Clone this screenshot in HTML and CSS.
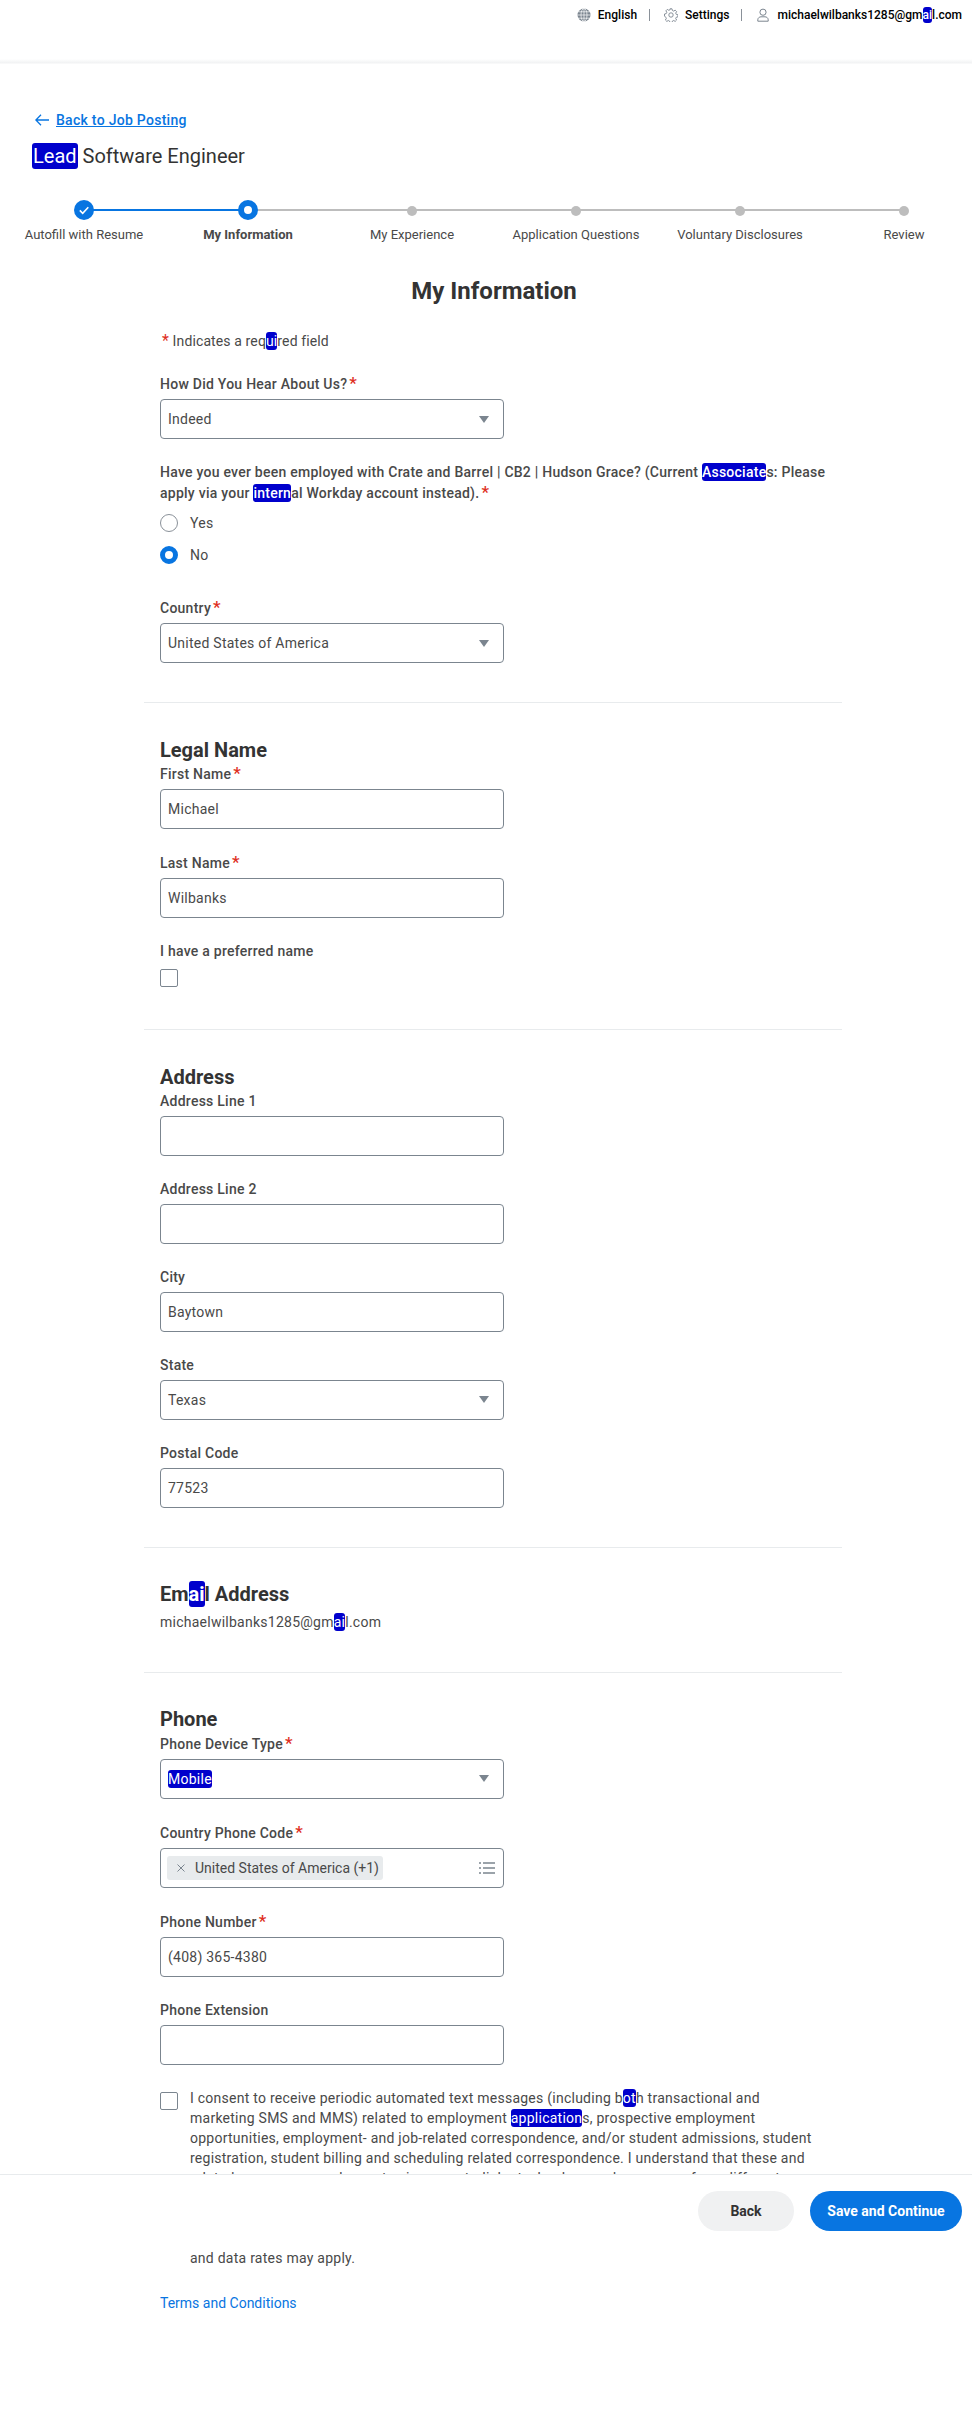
FILE: index.html
```html
<!DOCTYPE html>
<html lang="en">
<head>
<meta charset="utf-8">
<title>Lead Software Engineer - My Information</title>
<link rel="stylesheet" href="styles.css">
</head>
<body>
<header class="topbar">
  <div class="topnav">
    <svg class="nav-icon" viewBox="0 0 14 14"><circle cx="7" cy="7" r="6.5" fill="#7b858f"/><g fill="none" stroke="#fff" stroke-width=".7"><ellipse cx="7" cy="7" rx="3" ry="6.5"/><path d="M.5 7h13M1.4 3.8h11.2M1.4 10.2h11.2M7 .5v13"/></g></svg>
    <span>English</span>
    <i class="nav-sep"></i>
    <svg class="nav-icon gear" viewBox="0 0 14 14"><g fill="none" stroke="#7b858f" stroke-width=".9"><circle cx="7" cy="7" r="2.2"/><path d="M6 .8h2l.4 1.7 1.3.6 1.5-.9 1.4 1.4-.9 1.5.6 1.3 1.7.4v2l-1.7.4-.6 1.3.9 1.5-1.4 1.4-1.5-.9-1.3.6-.4 1.7H6l-.4-1.7-1.3-.6-1.5.9-1.4-1.4.9-1.5-.6-1.3L.5 8V6l1.7-.4.6-1.3-.9-1.5 1.4-1.4 1.5.9 1.3-.6z"/></g></svg>
    <span>Settings</span>
    <i class="nav-sep"></i>
    <svg class="nav-icon" viewBox="0 0 14 14"><g fill="none" stroke="#7b858f" stroke-width="1"><circle cx="7" cy="4.2" r="3.1"/><path d="M1.8 13.2v-1.4c0-1.8 1.6-3 3.2-3h4c1.6 0 3.2 1.2 3.2 3v1.4z"/></g></svg>
    <span>michaelwilbanks1285@gm<span class="hl">ai</span>l.com</span>
  </div>
</header>

<main class="page">
  <a class="back-link" href="#">
    <svg class="back-arrow" viewBox="0 0 14 12"><path d="M6 .8.9 6 6 11.2M1 6h13" fill="none" stroke="#0875e1" stroke-width="1.3"/></svg>
    <span>Back to Job Posting</span>
  </a>
  <div class="job-title"><span class="hl hl-title">Lead</span> Software Engineer</div>

  <ol class="stepper">
    <li class="step done"><span class="dot"><svg viewBox="0 0 20 20" class="check"><path d="M5.8 10.4l2.9 2.9 5.6-6" fill="none" stroke="#fff" stroke-width="1.6"/></svg></span><span class="step-label">Autofill with Resume</span></li>
    <li class="step current"><span class="dot"></span><span class="step-label">My Information</span></li>
    <li class="step"><span class="dot"></span><span class="step-label">My Experience</span></li>
    <li class="step"><span class="dot"></span><span class="step-label">Application Questions</span></li>
    <li class="step"><span class="dot"></span><span class="step-label">Voluntary Disclosures</span></li>
    <li class="step"><span class="dot"></span><span class="step-label">Review</span></li>
  </ol>

  <h1 class="page-heading">My Information</h1>

  <section class="section section-first">
    <p class="required-note"><span class="star">*</span> Indicates a req<span class="hl">ui</span>red field</p>
    <div class="field">
      <div class="label req">How Did You Hear About Us?<span class="star">*</span></div>
      <div class="box select">Indeed<i class="caret"></i></div>
    </div>
    <div class="question">
      <div class="question-text">Have you ever been employed with Crate and Barrel | CB2 | Hudson Grace? (Current <span class="hl">Associate</span>s: Please apply via your <span class="hl">intern</span>al Workday account instead).<span class="star">*</span></div>
      <div class="radio-row"><i class="radio"></i>Yes</div>
      <div class="radio-row"><i class="radio on"></i>No</div>
    </div>
    <div class="field">
      <div class="label req">Country<span class="star">*</span></div>
      <div class="box select">United States of America<i class="caret"></i></div>
    </div>
  </section>

  <section class="section section-legal">
    <h2 class="section-title">Legal Name</h2>
    <div class="field">
      <div class="label req">First Name<span class="star">*</span></div>
      <div class="box">Michael</div>
    </div>
    <div class="field">
      <div class="label req">Last Name<span class="star">*</span></div>
      <div class="box">Wilbanks</div>
    </div>
    <div class="label label-check">I have a preferred name</div>
    <i class="checkbox"></i>
  </section>

  <section class="section section-address">
    <h2 class="section-title">Address</h2>
    <div class="field">
      <div class="label">Address Line 1</div>
      <div class="box"></div>
    </div>
    <div class="field">
      <div class="label">Address Line 2</div>
      <div class="box"></div>
    </div>
    <div class="field">
      <div class="label">City</div>
      <div class="box">Baytown</div>
    </div>
    <div class="field">
      <div class="label">State</div>
      <div class="box select">Texas<i class="caret"></i></div>
    </div>
    <div class="field">
      <div class="label">Postal Code</div>
      <div class="box">77523</div>
    </div>
  </section>

  <section class="section section-email">
    <h2 class="section-title"><span>Em<span class="hl">ai</span>l Address</span></h2>
    <p class="email-value">michaelwilbanks1285@gm<span class="hl">ai</span>l.com</p>
  </section>

  <section class="section section-phone">
    <h2 class="section-title">Phone</h2>
    <div class="field">
      <div class="label req">Phone Device Type<span class="star">*</span></div>
      <div class="box select"><span class="hl">Mobile</span><i class="caret"></i></div>
    </div>
    <div class="field">
      <div class="label req">Country Phone Code<span class="star">*</span></div>
      <div class="box multi">
        <span class="tag">
          <svg class="tag-x" viewBox="0 0 8 8"><path d="M.5.5l7 7M7.5.5l-7 7" stroke="#7b858f" stroke-width="1" fill="none"/></svg>
          United States of America (+1)
        </span>
        <svg class="list-icon" viewBox="0 0 16 12"><path d="M0 1h2M4 1h12M0 6h2M4 6h12M0 11h2M4 11h12" stroke="#7b858f" stroke-width="1.4" fill="none"/></svg>
      </div>
    </div>
    <div class="field">
      <div class="label req">Phone Number<span class="star">*</span></div>
      <div class="box">(408) 365-4380</div>
    </div>
    <div class="field">
      <div class="label">Phone Extension</div>
      <div class="box"></div>
    </div>
    <div class="consent">
      <i class="checkbox consent-check"></i>
      <p class="consent-text">I consent to receive periodic automated text messages (including b<span class="hl">ot</span>h transactional and marketing SMS and MMS) related to employment <span class="hl">application</span>s, prospective employment opportunities, employment- and job-related correspondence, and/or student admissions, student registration, student billing and scheduling related correspondence. I understand that these and related messages may be sent using an autodialer technology and may come from different<br>numbers. Consent is not a condition of any purchase or of employment. You may reply<br>STOP to opt out at any time. Message frequency varies depending on your activity,<br>and you can contact us for help by replying HELP at any time. Message<br>and data rates may apply.</p>
    </div>
    <a class="terms" href="#">Terms and Conditions</a>
  </section>
</main>

<footer class="action-bar">
  <button class="btn btn-back" type="button">Back</button>
  <button class="btn btn-save" type="button">Save and Continue</button>
</footer>
</body>
</html>
```
FILE: styles.css
```css
* { box-sizing: border-box; }
html, body { margin: 0; padding: 0; }
body {
  position: relative;
  width: 972px;
  height: 2427px;
  overflow: hidden;
  background: #fff;
  color: #494949;
  font-family: Roboto, "Liberation Sans", sans-serif;
  font-size: 14px;
  letter-spacing: .25px;
}
.hl {
  background: #0000cc;
  color: #fff;
  border-radius: 3px;
  padding: 1px 0;
}
.star { color: #de2e21; }

/* Top bar */
.topbar {
  height: 64px;
  background: linear-gradient(to bottom, #fff 59px, #f1f2f3 63px, #fff 64px);
}
.topnav {
  display: flex;
  justify-content: flex-end;
  align-items: center;
  height: 30px;
  padding-right: 10px;
  color: #000;
  font-size: 12px;
  font-weight: 500;
  letter-spacing: 0;
}
.nav-icon { width: 14px; height: 14px; margin-right: 7px; }
.nav-sep {
  width: 1px;
  height: 12px;
  margin: 0 14px 0 12px;
  background: #8a9199;
}

/* Title area */
.page { padding-top: 46px; }
.back-link {
  display: inline-flex;
  align-items: center;
  height: 20px;
  margin-left: 35px;
  color: #0875e1;
  font-weight: 500;
  letter-spacing: .28px;
}
.back-link span { text-decoration: underline; }
.back-arrow { width: 14px; height: 12px; margin-right: 7px; }
.job-title {
  margin: 12px 0 0 32px;
  color: #333;
  font-size: 20px;
  line-height: 28px;
  letter-spacing: 0;
}
.hl-title { padding: 1px; }

/* Stepper */
.stepper {
  display: grid;
  grid-template-columns: repeat(6, 164px);
  width: 984px;
  margin: 30px 0 0 2px;
  padding: 0;
  list-style: none;
  letter-spacing: 0;
}
.step {
  position: relative;
  display: flex;
  flex-direction: column;
  align-items: center;
}
.step::before {
  content: "";
  position: absolute;
  top: 9px;
  left: -50%;
  width: 100%;
  height: 2px;
  background: #bdbdbd;
}
.step:first-child::before { display: none; }
.step.current::before { background: #0875e1; }
.dot {
  position: relative;
  z-index: 1;
  width: 10px;
  height: 10px;
  margin: 6px 0 4px;
  border-radius: 50%;
  background: #bdbdbd;
}
.done .dot, .current .dot {
  width: 20px;
  height: 20px;
  margin: 0;
  background: #0875e1;
}
.current .dot { border: 6px solid #0875e1; background: #fff; }
.check { display: block; width: 20px; height: 20px; }
.step-label {
  margin-top: 6px;
  font-size: 13px;
  line-height: 18px;
  white-space: nowrap;
}
.current .step-label { font-weight: 700; }

.page-heading {
  width: 984px;
  margin: 31px 0 0 2px;
  color: #333;
  font-size: 24px;
  font-weight: 700;
  line-height: 32px;
  letter-spacing: 0;
  text-align: center;
}

/* Sections */
.section {
  width: 698px;
  margin-left: 144px;
  padding: 34px 0 40px 16px;
  border-bottom: 1px solid #e8ebed;
}
.section-first { padding-top: 24px; padding-bottom: 38.7px; }
.section-legal { padding-top: 35px; padding-bottom: 42px; }
.section-address { padding-top: 35px; padding-bottom: 39.5px; }
.section-email { padding-bottom: 40.5px; }
.section-phone { padding-bottom: 0; border-bottom: 0; }
.section-title {
  margin: 0 0 1.5px;
  color: #333;
  font-size: 20px;
  font-weight: 700;
  line-height: 24px;
  letter-spacing: 0;
}
.required-note {
  margin: 0 0 22px 2px;
  line-height: 20px;
  letter-spacing: .12px;
}
.required-note .star { font-size: 16px; line-height: 0; }
.field { margin-bottom: 23px; }
.section > .field:last-child { margin-bottom: 0; }
.label {
  margin-bottom: 5px;
  font-weight: 500;
  line-height: 20px;
}
.label.req { padding-top: 1px; }
.label.label-check { margin-bottom: 8px; }
.label .star, .question-text .star {
  margin-left: 2px;
  font-size: 17px;
  line-height: 0;
}
.box {
  display: flex;
  align-items: center;
  justify-content: space-between;
  width: 344px;
  height: 40px;
  padding: 0 14px 0 7px;
  border: 1px solid #7b858f;
  border-radius: 4px;
  background: #fff;
}
.caret {
  width: 0;
  height: 0;
  border-style: solid;
  border-width: 7px 5px 0;
  border-color: #7b858f transparent transparent;
}
.multi { padding: 0 8px 0 6px; }
.tag {
  display: flex;
  align-items: center;
  width: 216px;
  height: 24px;
  padding-left: 10px;
  border-radius: 3px;
  background: #e8ebed;
  letter-spacing: 0;
  white-space: nowrap;
}
.tag-x { width: 8px; height: 8px; margin-right: 10px; }
.list-icon { width: 16px; height: 12px; }

.question { margin: .5px 0 26.3px; }
.question-text { font-weight: 500; line-height: 21px; width: 690px; }
.radio-row {
  display: flex;
  align-items: center;
  height: 32px;
}
.question-text + .radio-row { margin-top: 3px; }
.radio {
  width: 18px;
  height: 18px;
  margin-right: 12px;
  border: 1px solid #8a9199;
  border-radius: 50%;
}
.radio.on { border: 5px solid #0875e1; }
.checkbox {
  display: block;
  width: 18px;
  height: 18px;
  border: 1px solid #7b858f;
  border-radius: 2px;
  background: #fff;
}

.email-value { margin: 5.2px 0 0; line-height: 20px; }

.consent { display: flex; margin-top: 22.5px; }
.consent-check { flex: none; margin: 4px 12px 0 0; }
.consent-text { width: 628px; margin: 0; line-height: 20px; }
.terms {
  display: block;
  margin-top: 25px;
  color: #0875e1;
  line-height: 20px;
  letter-spacing: 0;
  text-decoration: none;
}

/* Bottom bar */
.action-bar {
  position: absolute;
  top: 2174px;
  left: 0;
  display: flex;
  justify-content: flex-end;
  gap: 16px;
  width: 972px;
  height: 76px;
  padding: 16px 10px 0 0;
  border-top: 1px solid #e8ebed;
  background: #fff;
}
.btn {
  height: 40px;
  border: 0;
  border-radius: 20px;
  font: 700 14px Roboto, "Liberation Sans", sans-serif;
}
.btn-back { width: 96px; background: #f0f1f2; color: #333; }
.btn-save { width: 152px; background: #0875e1; color: #fff; }
```
